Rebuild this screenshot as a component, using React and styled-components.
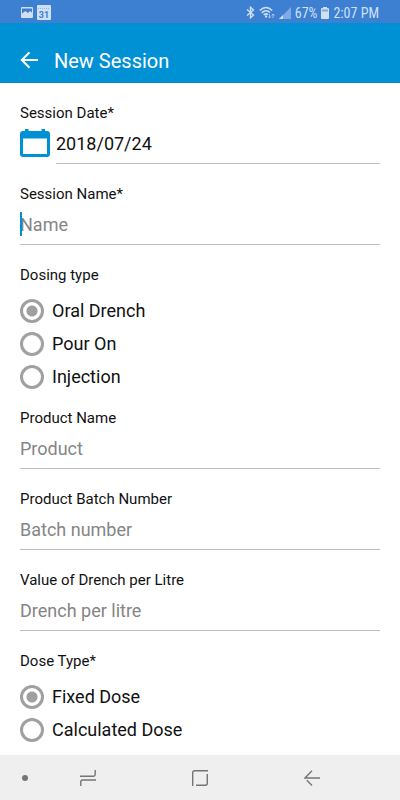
import React from "react";
import styled, { createGlobalStyle } from "styled-components";

const GlobalStyle = createGlobalStyle`
  * {
    box-sizing: border-box;
  }

  body {
    margin: 0;
    background: #fff;
    color: #111;
    font-family: Roboto, "Liberation Sans", sans-serif;
  }
`;

const Screen = styled.div`
  display: flex;
  flex-direction: column;
  min-height: 100vh;
`;

const StatusBar = styled.div`
  display: flex;
  justify-content: space-between;
  align-items: center;
  height: 23px;
  padding: 2px 21px 0 20px;
  background: #3d7fd1;
  color: #cfe0f5;
  font-size: 14px;
  line-height: 20px;
`;

const StatusGroup = styled.div`
  display: flex;
  align-items: center;
  gap: 4px;
`;

const StatusText = styled.span`
  font-family: "Roboto Condensed", Roboto, sans-serif;
`;

const Header = styled.header`
  display: flex;
  align-items: center;
  gap: 16px;
  height: 60px;
  padding: 16px 20px 0;
  background: #0091d5;
  border-bottom: 1px solid #0087c8;
  color: #fff;
`;

const IconButton = styled.button`
  display: flex;
  padding: 0;
  border: none;
  background: none;
  color: inherit;
`;

const Title = styled.h1`
  margin: 0;
  font-size: 20px;
  line-height: 24px;
  font-weight: 400;
`;

const Form = styled.form`
  flex: 1;
  padding: 20px 20px 9px;
`;

const Field = styled.div`
  margin-bottom: 20px;
`;

const Label = styled.label`
  display: block;
  font-size: 15px;
  line-height: 20px;
`;

const InputRow = styled.div`
  position: relative;
  display: flex;
  align-items: center;
  gap: 6px;
`;

const Input = styled.input`
  flex: 1;
  min-width: 0;
  height: 41px;
  padding: 0;
  border: none;
  border-bottom: 1px solid #bdbdbd;
  border-radius: 0;
  outline: none;
  background: none;
  color: #111;
  font-family: inherit;
  font-size: 18px;

  &::placeholder {
    color: #858585;
    opacity: 1;
  }
`;

const Caret = styled.span`
  position: absolute;
  left: 0;
  top: 8px;
  width: 2px;
  height: 24px;
  background: #0091d5;
`;

const Group = styled.fieldset`
  margin: 0 0 15px;
  padding: 0;
  border: none;

  &:last-child {
    margin-bottom: 0;
  }
`;

const Legend = styled.legend`
  margin-bottom: 9px;
  padding: 0;
  font-size: 15px;
  line-height: 20px;
`;

const Option = styled.label`
  display: flex;
  align-items: center;
  gap: 8px;
  height: 33px;
  font-size: 18px;
`;

const Radio = styled.input`
  appearance: none;
  flex: none;
  width: 24px;
  height: 24px;
  margin: 0;
  border: 3px solid #a0a0a0;
  border-radius: 50%;
  background: #fff;

  &:checked {
    background: radial-gradient(circle, #a0a0a0 5px, #fff 6px);
  }
`;

const NavBar = styled.nav`
  display: grid;
  grid-template-columns: 8% 28% 28% 28% 8%;
  align-items: center;
  justify-items: center;
  height: 45px;
  background: #efefef;
  color: #757575;
`;

const NavDot = styled.span`
  justify-self: end;
  width: 6px;
  height: 6px;
  margin-right: 4px;
  border-radius: 50%;
  background: #757575;
`;

function ImageIcon() {
  return (
    <svg width="13" height="13" viewBox="0 0 13 13">
      <rect x="1" y="1" width="12" height="11" rx="1" fill="#cfe0f5" />
      <path d="M2 7.500V2.500h10v4L10 5 8 7 5.500 5Z" fill="#3d7fd1" />
    </svg>
  );
}

function DayIcon() {
  return (
    <svg width="14" height="15" viewBox="0 0 14 15">
      <rect width="14" height="15" rx="1" fill="#cfe0f5" />
      <path d="M1 3.500h12" stroke="#8fb3e3" strokeDasharray="1 1" />
      <text x="7" y="13" textAnchor="middle" fontSize="9" fontWeight="700" fill="#3d7fd1">
        31
      </text>
    </svg>
  );
}

function BluetoothIcon() {
  return (
    <svg width="9" height="13" viewBox="0 0 9 13" fill="none" stroke="currentColor" strokeWidth="1.4">
      <path d="M1 3.500 7.500 9 4.500 11.700V1.300L7.500 4 1 9.500" />
    </svg>
  );
}

function WifiIcon() {
  return (
    <svg width="16" height="13" viewBox="0 0 16 13" fill="none" stroke="currentColor" strokeWidth="1.6">
      <path d="M.8 4.500Q7 -1.500 13.200 4.500M2.800 6.800Q7 2.800 11 6.500M4.800 9Q7 6.800 9 8.700" />
      <path d="M7 9.500v2" strokeWidth="2" />
      <path d="M10.500 8v4M9.200 10.500l1.300 1.500 1.300-1.500M14 12V8M12.700 9.500 14 8l1.300 1.500" strokeWidth="1" opacity=".7" />
    </svg>
  );
}

function SignalIcon() {
  return (
    <svg width="12" height="12" viewBox="0 0 12 12">
      <path d="M0 12 12 0v12Z" fill="#7faae2" />
      <path d="M0 12 4 8v4Z" fill="#cfe0f5" />
    </svg>
  );
}

function BatteryIcon() {
  return (
    <svg width="8" height="12" viewBox="0 0 8 12">
      <path d="M2 0h4v1h1q1 0 1 1v9q0 1-1 1H1q-1 0-1-1V2q0-1 1-1h1Z" fill="#cfe0f5" />
      <path d="M1 2.500h6v2H1Z" fill="#7faae2" />
    </svg>
  );
}

function BackIcon() {
  return (
    <svg width="18" height="18" viewBox="0 0 18 18" fill="none" stroke="currentColor" strokeWidth="2">
      <path d="M18 8H2M9.500 .3 1.800 8l7.700 7.700" />
    </svg>
  );
}

function CalendarIcon() {
  return (
    <svg width="30" height="30" viewBox="0 0 30 30">
      <path
        d="M5 0h3.500v2h13V0H25v2h2q3 0 3 3v20q0 3-3 3H3q-3 0-3-3V5q0-3 3-3h2ZM3 9.500v15.500h24V9.500Z"
        fill="#0091d5"
        fillRule="evenodd"
      />
    </svg>
  );
}

function RecentsIcon() {
  return (
    <svg width="16" height="18" viewBox="0 0 16 18" fill="none" stroke="currentColor" strokeWidth="1.4">
      <path d="M0 7.200h13.500q1.700 0 1.700-1.700V1M16 11H2.500Q.8 11 .8 12.700V17" />
    </svg>
  );
}

function HomeIcon() {
  return (
    <svg width="16" height="16" viewBox="0 0 16 16" fill="none" stroke="currentColor" strokeWidth="1.4">
      <path d="M.7 16V2.700q0-2 2-2H16M15.300 4v9.300q0 2-2 2H4" />
    </svg>
  );
}

function NavBackIcon() {
  return (
    <svg width="16" height="16" viewBox="0 0 16 16" fill="none" stroke="currentColor" strokeWidth="1.4">
      <path d="M16 8H1L8 .7M2.800 10.200 8 15.500" />
    </svg>
  );
}

function TextField({ id, label, icon, caret, ...rest }) {
  return (
    <Field>
      <Label htmlFor={id}>{label}</Label>
      <InputRow>
        {icon}
        <Input id={id} type="text" {...rest} />
        {caret && <Caret />}
      </InputRow>
    </Field>
  );
}

function RadioGroup({ name, legend, options }) {
  return (
    <Group>
      <Legend>{legend}</Legend>
      {options.map((option, i) => (
        <Option key={option}>
          <Radio type="radio" name={name} value={option} defaultChecked={i === 0} />
          {option}
        </Option>
      ))}
    </Group>
  );
}

export default function App() {
  return (
    <Screen>
      <GlobalStyle />
      <StatusBar>
        <StatusGroup>
          <ImageIcon />
          <DayIcon />
        </StatusGroup>
        <StatusGroup>
          <BluetoothIcon />
          <WifiIcon />
          <SignalIcon />
          <StatusText>67%</StatusText>
          <BatteryIcon />
          <StatusText>2:07 PM</StatusText>
        </StatusGroup>
      </StatusBar>
      <Header>
        <IconButton type="button" aria-label="Back">
          <BackIcon />
        </IconButton>
        <Title>New Session</Title>
      </Header>
      <Form>
        <TextField id="date" label="Session Date*" defaultValue="2018/07/24" icon={<CalendarIcon />} />
        <TextField id="name" label="Session Name*" placeholder="Name" caret />
        <RadioGroup name="dosing" legend="Dosing type" options={["Oral Drench", "Pour On", "Injection"]} />
        <TextField id="product" label="Product Name" placeholder="Product" />
        <TextField id="batch" label="Product Batch Number" placeholder="Batch number" />
        <TextField id="value" label="Value of Drench per Litre" placeholder="Drench per litre" />
        <RadioGroup name="dose" legend="Dose Type*" options={["Fixed Dose", "Calculated Dose"]} />
      </Form>
      <NavBar>
        <NavDot />
        <IconButton type="button" aria-label="Recent apps">
          <RecentsIcon />
        </IconButton>
        <IconButton type="button" aria-label="Home">
          <HomeIcon />
        </IconButton>
        <IconButton type="button" aria-label="Go back">
          <NavBackIcon />
        </IconButton>
      </NavBar>
    </Screen>
  );
}
